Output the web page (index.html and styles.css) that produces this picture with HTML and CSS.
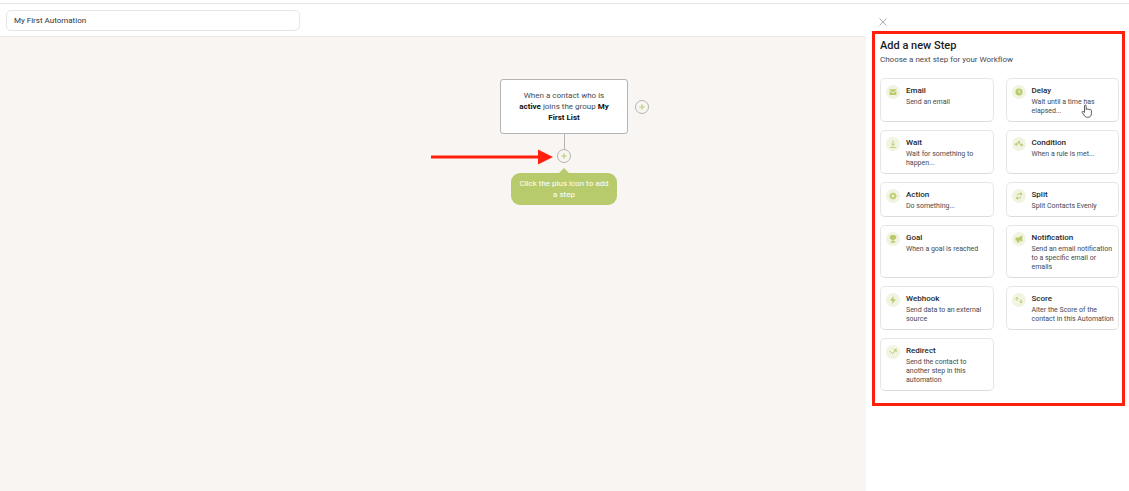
FILE: index.html
```html
<!DOCTYPE html>
<html lang="en">
<head>
    <meta charset="utf-8">
    <meta name="viewport" content="width=device-width, initial-scale=1.0">

    <title>My First Automation</title>

    <link rel="stylesheet" href="styles.css">
</head>
<body>
    <header class="topbar">
        <input class="name-input" type="text" value="My First Automation" aria-label="Automation name">
    </header>

    <main class="canvas">
        <div class="flow">
            <div class="node">
                <p class="node-text">When a contact who is <b>active</b> joins the group <b>My</b> <b>First List</b></p>
                <button class="plus plus--side" type="button" aria-label="Add trigger">
                    <svg viewBox="0 0 14 14"><path d="M7 4.2v5.6M4.2 7h5.6"/></svg>
                </button>
            </div>
            <div class="connector"></div>
            <div class="next">
                <button class="plus" type="button" aria-label="Add step">
                    <svg viewBox="0 0 14 14"><path d="M7 4.2v5.6M4.2 7h5.6"/></svg>
                </button>
                <svg class="arrow" viewBox="0 0 122 16">
                    <path d="M0 6.5h108v3H0zM107 .5l15 7.5-15 7.5z"/>
                </svg>
            </div>
            <div class="hint">Click the plus icon to add a step</div>
        </div>
    </main>

    <aside class="panel">
        <button class="close" type="button" aria-label="Close">
            <svg viewBox="0 0 8 8"><path d="M.5.5l7 7M7.5.5l-7 7"/></svg>
        </button>

        <section class="steps">
            <h2 class="steps-title">Add a new Step</h2>
            <p class="steps-info">Choose a next step for your Workflow</p>

            <div class="grid">
                <button class="card" type="button">
                    <span class="icon"><svg viewBox="0 0 14 14"><path class="fill" d="M3.6 4.3h6.8v.8L7 7.3 3.6 5.1zM3.6 6L7 8.2 10.4 6v3.9H3.6z"/></svg></span>
                    <span class="text"><span class="name">Email</span><span class="desc">Send an email</span></span>
                </button>
                <button class="card" type="button">
                    <span class="icon"><svg viewBox="0 0 14 14"><circle class="fill" cx="7" cy="7" r="3.5"/><path class="cut" d="M7 4.8v2.4l1.5.9"/></svg></span>
                    <span class="text"><span class="name">Delay</span><span class="desc">Wait until a time has elapsed...</span></span>
                    <svg class="cursor" viewBox="0 0 12 14"><path d="M3.5 8.5V2c0-1.3 1.7-1.3 1.7 0v3.5c.2-.9 1.6-.9 1.8.1.3-.8 1.6-.7 1.7.3.4-.7 1.7-.5 1.7.6v3.2c0 2-1 3.600-3.800 3.600-2 0-2.700-.8-3.600-2.300L1.200 8.500c-.5-1 .6-1.600 1.300-.9z"/></svg>
                </button>
                <button class="card" type="button">
                    <span class="icon"><svg viewBox="0 0 14 14"><path d="M7 3.500v5M5.200 6.800L7 8.600l1.800-1.800M4.200 10.400h5.600"/></svg></span>
                    <span class="text"><span class="name">Wait</span><span class="desc">Wait for something to happen...</span></span>
                </button>
                <button class="card" type="button">
                    <span class="icon"><svg viewBox="0 0 14 14"><path d="M6.400 4v1.800c0 1-.6 1.400-1.400 1.400H3.800M7.600 4v2.800c0 .8.500 1.200 1.200 1.200h1.400"/><path class="fill" d="M2.600 7.200l2.200-2v4zM11.400 8L9.200 6v4z"/></svg></span>
                    <span class="text"><span class="name">Condition</span><span class="desc">When a rule is met...</span></span>
                </button>
                <button class="card" type="button">
                    <span class="icon"><svg viewBox="0 0 14 14"><circle class="ring" cx="7" cy="7" r="2.100"/><path class="teeth" d="M7 3.400v1.200M7 9.400v1.200M3.400 7h1.200M9.400 7h1.200M4.500 4.500l.8.8M8.700 8.700l.8.8M4.500 9.500l.8-.8M8.700 5.300l.8-.8"/></svg></span>
                    <span class="text"><span class="name">Action</span><span class="desc">Do something...</span></span>
                </button>
                <button class="card" type="button">
                    <span class="icon"><svg viewBox="0 0 14 14"><path d="M5 6.300c.3-.9.900-1.400 2-1.400h1.600M9 7.700c-.3.9-.9 1.400-2 1.400H5.400"/><path class="fill" d="M10.400 4.900L8.200 3v3.800zM3.600 9.100l2.200-1.900V11z"/></svg></span>
                    <span class="text"><span class="name">Split</span><span class="desc">Split Contacts Evenly</span></span>
                </button>
                <button class="card" type="button">
                    <span class="icon"><svg viewBox="0 0 14 14"><path class="fill" d="M5.300 3h3.400l1.500 1.300v2L8.700 7.800H7.600v1.500h1.600v1.400H4.800V9.300h1.600V7.800H5.300L3.800 6.300v-2z"/></svg></span>
                    <span class="text"><span class="name">Goal</span><span class="desc">When a goal is reached</span></span>
                </button>
                <button class="card" type="button">
                    <span class="icon"><svg viewBox="0 0 14 14"><path class="fill" d="M10.300 3.200v6.600L7.200 8.500v2.300H5.300L4.700 8.400H3.500V5.500h3z"/></svg></span>
                    <span class="text"><span class="name">Notification</span><span class="desc">Send an email notification to a specific email or emails</span></span>
                </button>
                <button class="card" type="button">
                    <span class="icon"><svg viewBox="0 0 14 14"><path class="fill" d="M7.600 3L3.900 7.600h2.500L6 11l4-4.700H7.300z"/></svg></span>
                    <span class="text"><span class="name">Webhook</span><span class="desc">Send data to an external source</span></span>
                </button>
                <button class="card" type="button">
                    <span class="icon"><svg viewBox="0 0 14 14"><path d="M5 7.600V4.500M3.600 5.800L5 4.400l1.400 1.400M9 6.300v3.500M7.600 8.500L9 9.900l1.400-1.400"/></svg></span>
                    <span class="text"><span class="name">Score</span><span class="desc">Alter the Score of the contact in this Automation</span></span>
                </button>
                <button class="card" type="button">
                    <span class="icon"><svg viewBox="0 0 14 14"><path d="M3.800 6l2.600 2.600L10 5M7.700 4.700h2.500v2.500"/></svg></span>
                    <span class="text"><span class="name">Redirect</span><span class="desc">Send the contact to another step in this automation</span></span>
                </button>
            </div>
        </section>
    </aside>
</body>
</html>
```
FILE: styles.css
```css
:root {
    --ff: Roboto, 'Open Sans', sans-serif;
    --green: #b8cb6c;
    --green-light: #f0f4e0;
    --red: #fe200c;
    --line: #e6e6e6;
    --grey: #b4b4b4;
}

* {
    box-sizing: border-box;
}

body {
    font-family: var(--ff);
    font-size: 8px;
    color: #454a50;
    background-color: #fff;

    margin: 0;
    padding-top: 3px;
    min-height: 100vh;

    position: relative;
    display: flex;
    flex-direction: column;
}

button {
    font: inherit;
    color: inherit;
    background: none;
    border: 0;
    padding: 0;
}

svg {
    display: block;
    fill: none;
}

/* Top bar */
.topbar {
    border-top: 1px solid var(--line);
    border-bottom: 1px solid #ece9e6;
    padding: 6px 6px 5px;
}
.name-input {
    font: inherit;
    color: #30353a;
    border: 1px solid var(--line);
    border-radius: 5px;

    display: block;
    width: 294px;
    height: 21px;
    padding: 0 7px;
}

/* Canvas */
.canvas {
    background-color: #f8f5f2;
    padding: 42px 1px 0 0;
    flex: 1;
}
.flow {
    display: flex;
    flex-direction: column;
    align-items: center;
}
.node {
    background-color: #fff;
    border: 1px solid var(--grey);
    border-radius: 3px;

    position: relative;
    width: 128px;
    padding: 10px 16px;
}
.node-text {
    line-height: 11px;
    text-align: center;
    margin: 0;
}
.node-text b {
    font-weight: 700;
    color: #111;
}
.connector {
    background-color: var(--grey);
    width: 1px;
    height: 15px;
}
.plus {
    border: 1px solid var(--grey);
    border-radius: 50%;

    display: flex;
    justify-content: center;
    align-items: center;
    width: 14px;
    height: 14px;
}
.plus svg {
    stroke: var(--green);
    width: 14px;
    height: 14px;
    flex: none;
}
.plus--side {
    position: absolute;
    left: 134px;
    top: 20px;
}
.next {
    position: relative;
}
.arrow {
    fill: var(--red);

    position: absolute;
    right: 18px;
    top: 0;
    width: 122px;
    height: 16px;
}
.hint {
    color: #fff;
    line-height: 11px;
    text-align: center;
    background-color: var(--green);
    border-radius: 9px;

    position: relative;
    width: 106px;
    margin-top: 10px;
    padding: 5px 7px;
}
.hint::before {
    content: '';
    border: 5px solid transparent;
    border-top: 0;
    border-bottom-color: var(--green);

    position: absolute;
    left: 48px;
    top: -5px;
}

/* Step panel, lies over the canvas */
.panel {
    background-color: #fff;
    border-top: 1px solid var(--line);

    position: absolute;
    top: 3px;
    right: 0;
    bottom: 0;
    width: 263px;
    padding: 14px 4px 0 6px;
}
.close {
    display: block;
    margin-left: 7px;
}
.close svg {
    stroke: #999;
    stroke-width: .8;
    width: 8px;
    height: 8px;
}
.steps {
    border: 3px solid var(--red);
    margin-top: 5px;
    padding: 5px 3px 12px 5px;
}
.steps-title {
    font-size: 11px;
    font-weight: 500;
    line-height: 14px;
    color: #1c1c1c;
    margin: 0;
}
.steps-info {
    line-height: 12px;
    margin: 1px 0 12px;
}
.grid {
    display: grid;
    grid-template-columns: 1fr 1fr;
    gap: 8px 12px;
}
.card {
    text-align: left;
    border: 1px solid var(--line);
    border-bottom-color: #dcdcdc;
    border-radius: 5px;

    position: relative;
    display: flex;
    align-items: flex-start;
    gap: 6px;
    padding: 6px 4px 5px 5px;
}
.icon {
    background-color: var(--green-light);
    border-radius: 50%;
    flex: none;
}
.icon svg {
    stroke: var(--green);
    width: 14px;
    height: 14px;
}
.icon .fill {
    fill: var(--green);
    stroke: none;
}
.icon .cut {
    stroke: #fff;
    stroke-width: .8;
}
.icon .ring {
    stroke-width: 1.5;
}
.icon .teeth {
    stroke-width: 1.3;
}
.text {
    display: flex;
    flex-direction: column;
    gap: 2px;
    padding-top: 1px;
}
.name {
    font-weight: 500;
    line-height: 10px;
    color: #24282c;
}
.desc {
    font-size: 7px;
    line-height: 9px;
}
.cursor {
    fill: #fff;
    stroke: #333;
    stroke-width: .8;

    position: absolute;
    left: 74px;
    top: 25px;
    width: 12px;
    height: 14px;
}
```
